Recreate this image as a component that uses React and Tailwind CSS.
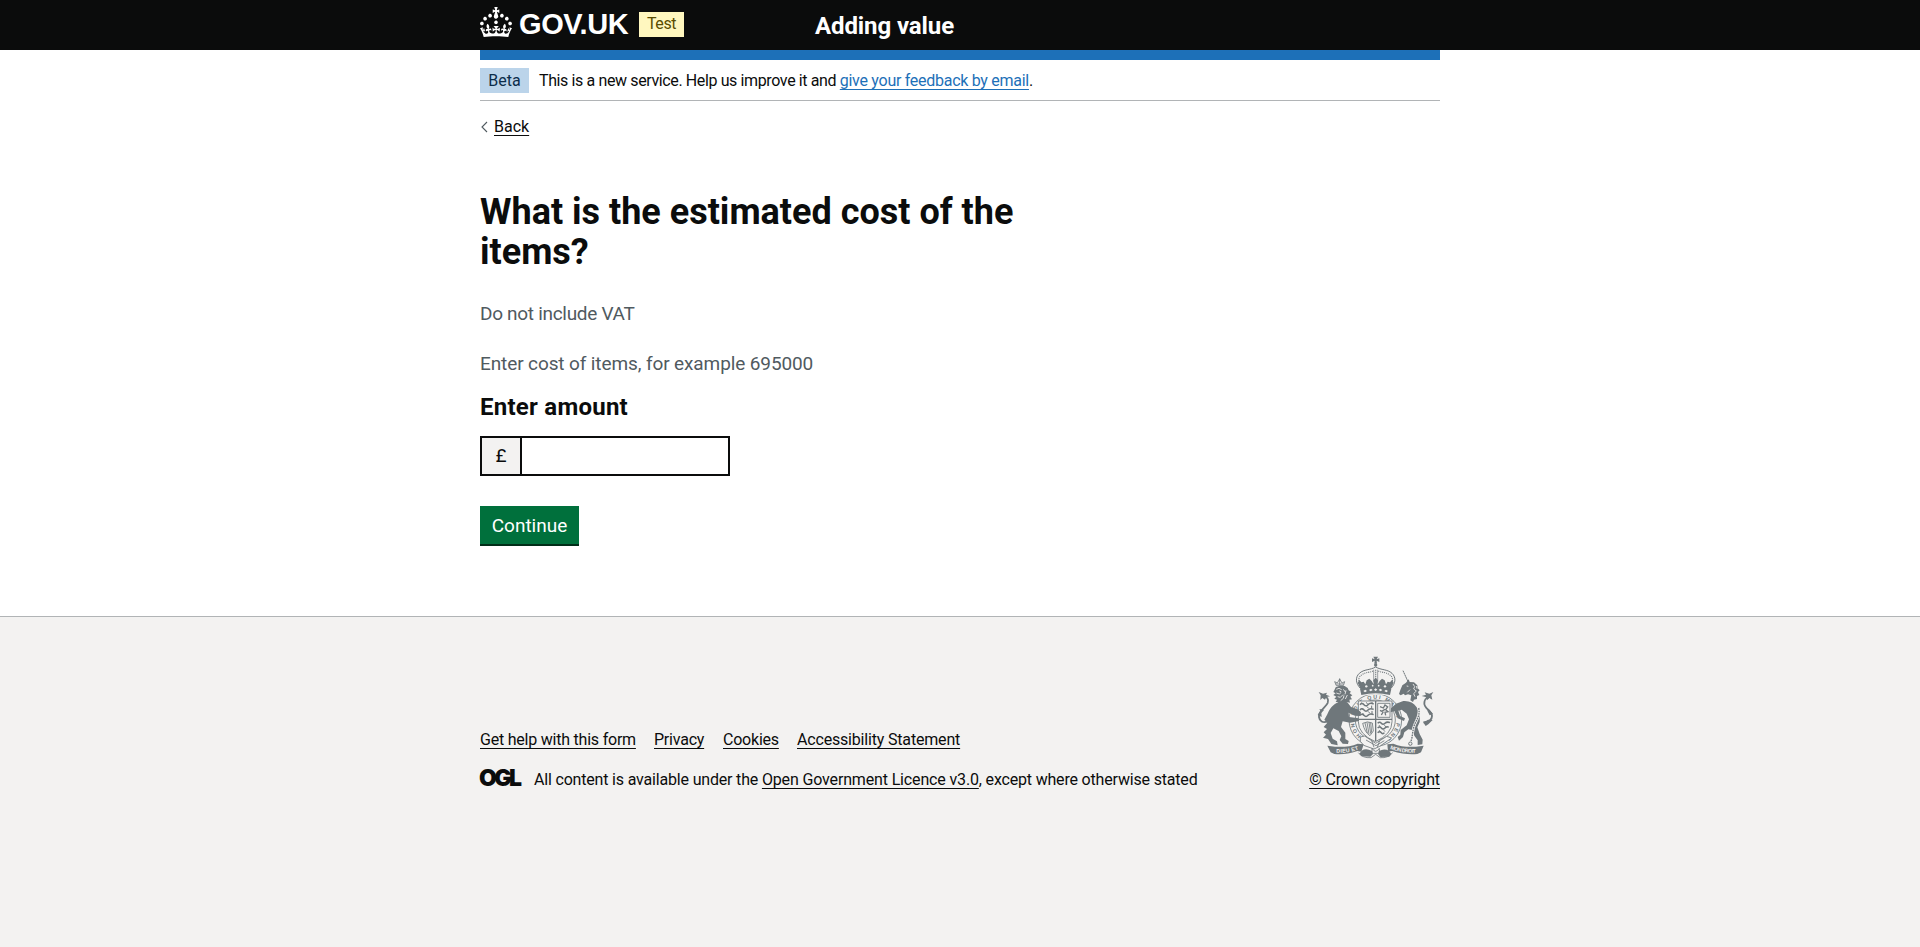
import React from "react";

const linkBase = "underline decoration-1 underline-offset-[3px]";

function CrownLogo() {
  return (
    <svg className="h-[30px] w-8 shrink-0 fill-white" viewBox="0 0 32 30" aria-hidden="true">
      <path d="M22.6 10.4c-1 .4-2-.1-2.4-1-.4-.9.1-2 1-2.4.9-.4 2 .1 2.4 1s-.1 2-1 2.4m-5.9 6.7c-.9.4-2-.1-2.4-1-.4-.9.1-2 1-2.4.9-.4 2 .1 2.4 1s-.1 2-1 2.4m10.8-3.7c-1 .4-2-.1-2.4-1-.4-.9.1-2 1-2.4.9-.4 2 .1 2.4 1s0 2-1 2.4m3.3 4.8c-1 .4-2-.1-2.4-1-.4-.9.1-2 1-2.4.9-.4 2 .1 2.4 1s-.1 2-1 2.4M17 4.7l2.3 1.2V2.5l-2.3.7-.2-.2.9-3h-3.4l.9 3-.2.2c-.1.1-2.3-.7-2.3-.7v3.4L15 4.7c.1.1.1.2.2.2l-1.3 4c-.1.2-.1.4-.1.6 0 1.1.8 2 1.9 2.2h.7c1-.2 1.9-1.1 1.9-2.1 0-.2 0-.4-.1-.6l-1.3-4c-.1-.2 0-.2.1-.3m-7.6 5.7c.9.4 2-.1 2.4-1 .4-.9-.1-2-1-2.4-.9-.4-2 .1-2.4 1s0 2 1 2.4m-5 3c.9.4 2-.1 2.4-1 .4-.9-.1-2-1-2.4-.9-.4-2 .1-2.4 1s.1 2 1 2.4m-3.2 4.8c.9.4 2-.1 2.4-1 .4-.9-.1-2-1-2.4-.9-.4-2 .1-2.4 1s0 2 1 2.4m14.8 11c4.4 0 8.6.3 12.3.8 1.1-4.5 2.4-7 3.7-8.8l-2.5-.9c.2 1.3.3 1.9 0 2.7-.4-.4-.8-1.1-1.1-2.3l-1.2 4c.7-.5 1.3-.8 2-.9-1.1 2.5-2.6 3.1-3.5 3-1.1-.2-1.7-1.2-1.5-2.1.3-1.2 1.5-1.5 2.1-.1 1.1-2.3-.8-3-2-2.3 1.9-1.9 2.1-3.5.6-5.6-2.1 1.6-2.1 3.2-1.2 5.5-1.2-1.4-3.2-.6-2.5 1.6.9-1.4 2.1-.5 1.9.8-.2 1.1-1.7 2.1-3.5 1.9-2.7-.2-2.9-2.1-2.9-3.6.7-.1 1.9.5 2.9 1.9l.4-4.3c-1.1 1.1-2.1 1.4-3.2 1.4.4-1.2 2.1-3 2.1-3h-5.4s1.7 1.9 2.1 3c-1.1 0-2.1-.2-3.2-1.4l.4 4.3c1-1.4 2.2-2 2.9-1.9-.1 1.5-.2 3.4-2.9 3.6-1.9.2-3.4-.8-3.5-1.9-.2-1.3 1-2.2 1.9-.8.7-2.3-1.2-3-2.5-1.6.9-2.2.9-3.9-1.2-5.5-1.5 2-1.3 3.7.6 5.6-1.2-.7-3.1 0-2 2.3.6-1.4 1.8-1.1 2.1.1.2.9-.3 1.9-1.5 2.1-.9.2-2.4-.5-3.5-3 .6 0 1.2.3 2 .9l-1.2-4c-.3 1.1-.7 1.9-1.1 2.3-.3-.8-.2-1.4 0-2.7l-2.9.9C1.3 23 2.6 25.5 3.7 30c3.7-.5 7.9-.8 12.3-.8" />
    </svg>
  );
}

function RoyalArms() {
  return (
    <svg
      className="h-[105px] w-[120px] fill-[#6f777b] stroke-[#6f777b]"
      viewBox="75 46 360 315"
      strokeWidth="0"
      aria-hidden="true"
    >
      {/* crown */}
      <path d="M253 72 254 63 246 67V56L254 59 250 51H264L260 59 268 56V67L260 63 261 72Z" />
      <circle cx="257" cy="76" r="5" />
      <g fill="none" strokeWidth="3">
        <path d="M211 146C196 130 196 112 208 101 222 88 240 92 257 82 274 92 292 88 306 101 318 112 318 130 303 146" />
        <path d="M251 90V126M263 90V126" strokeWidth="2" />
        <path d="M257 90V122" strokeWidth="4" strokeDasharray="3 3" />
        <path d="M213 134C202 120 206 112 216 105 230 96 240 99 249 94M301 134C312 120 308 112 298 105 284 96 274 99 265 94" strokeWidth="3.5" strokeDasharray="3 3" />
      </g>
      <path d="M203 129 208 121 214 128 221 126 226 134 230 122 238 117 245 124 251 134 250 122 257 114 264 122 263 134 269 124 276 117 284 122 288 134 293 126 300 128 306 121 311 129 302 149H212Z" />
      <path d="M210 147Q257 137 304 147L300 166Q257 156 214 166Z" />
      <g className="fill-[#f3f2f1]">
        <path d="M220 154l6-4 5 4-6 4zM237 151l6-4 5 4-6 4zM252 150l5-4 5 4-5 4zM266 151l5-4 6 4-5 4zM283 154l5-4 6 4-5 4z" />
        <circle cx="229" cy="140" r="3.5" /><circle cx="285" cy="140" r="3.5" />
        <circle cx="248" cy="138" r="2.5" /><circle cx="266" cy="138" r="2.5" />
      </g>
      {/* garter */}
      <clipPath id="below-crown"><path d="M75 169H214Q257 159 300 169H435V361H75Z" /></clipPath>
      <g clipPath="url(#below-crown)" fill="none" strokeWidth="2.5">
        <circle cx="256" cy="241" r="79" />
        <circle cx="256" cy="241" r="60" />
      </g>
      <path id="garter-band" d="M256 305A64 64 0 0 1 256 177A64 64 0 0 1 256 305" fill="none" />
      <text className="font-['Liberation_Sans',sans-serif] text-[16px] font-bold" textLength="336">
        <textPath href="#garter-band" startOffset="46">HONI SOIT QUI MAL Y PENSE</textPath>
      </text>
      {/* shield */}
      <path d="M205 184H306V246Q306 284 256 306 205 284 205 246Z" className="fill-[#f3f2f1]" strokeWidth="2.5" />
      <path d="M257 184V304M205 239H306" strokeWidth="4" />
      <g fill="none" strokeWidth="4.5">
        <path d="M210 195q6-7 12 0t12 0 17-2M210 211q6-7 12 0t12 0 17-2M210 227q6-7 12 0t12 0 17-2" />
        <path d="M214 189l7 6M230 200l6 6M245 198v8M214 205l6 6M234 215l6 6M218 220l5 9M246 214v9M229 188l4 6M246 187v6" strokeWidth="3" />
        <path d="M263 251q6-6 11 0t11 0 15-2M263 265q6-6 11 0t11 0 11-2M263 279q6-6 11 0t9 0" />
        <path d="M267 256l5 8M283 256l6 8M267 271l6 7M280 270l5 6" strokeWidth="2.5" />
        <path d="M263 191H300V233H263Z" strokeWidth="2.5" />
        <path d="M270 201l10 4 5-9 8 6-6 8 7 6-9 2 2 9M285 209l-10 6-5-3M280 216l-6 10" strokeWidth="4" />
        <path d="M218 251Q232 243 247 250L250 274 240 288Q224 278 218 251M225 250l7 30M231 248l6 35M237 248l5 34M242 249l3 30" strokeWidth="2.5" />
      </g>
      {/* lion */}
      <g fill="none" strokeWidth="2.5">
        <path d="M139 138l-5-12 8 4 7-12 7 12 8-4-4 12ZM137 133h24M149 116v20" />
      </g>
      <path d="M133 152l4-9 12-5 15 1 9 6 3 7 7 4-4 5 8 6-6 4 5 8-8 1 2 9-9-2-4 7-15-2-8 3 1-8-8 0 4-7-8-3 6-6-9-5 7-5-7-4Z" />
      <path d="M139 149l8-3 8 4M139 160l9 3 6-5M143 171l8 2 8-8M152 183l8-7 2-9M160 149l6 8M168 152l-3 12M172 166l-6 12M148 154l5 2" fill="none" className="stroke-[#f3f2f1]" strokeWidth="2.5" />
      <path d="M148 186C128 193 118 208 112 224L103 240 112 249 101 262 111 268 101 278 108 285 99 294 114 298 124 313 143 317 141 305 128 297 122 280 130 266 146 274 154 290 149 301 158 312 174 313 176 304 166 298 166 279 153 262 158 245 180 249 207 244 206 236 177 232 176 219 195 228 211 229 213 218 203 209 183 202 172 188Z" />
      <path d="M113 246Q90 252 87 232C84 214 108 203 113 190 117 178 111 170 101 172" fill="none" strokeWidth="5.5" />
      <path d="M86 157l13 5 12-3-3 6 12 5-11 2-4 8-8-5-6 6 1-14ZM83 226l8-13-3-5 14 3-8 9 1 12Z" />
      {/* unicorn */}
      <path d="M339 93L355 128" fill="none" strokeWidth="3" strokeDasharray="6 1" />
      <path d="M331 151l6-14 11-8 8-10 3 8 13 1 10 9 1 9 6 6-5 5 4 9-7 3 0 9-9 2-3 7-8-5 3-15-10-3-9 3-4-5-9 5-5-4Z" />
      <path d="M369 133q9 8 2 15l8 6-8 8 4 9M350 139l5 1M379 139l2 8M360 150l-8 8" fill="none" className="stroke-[#f3f2f1]" strokeWidth="2.5" />
      <path d="M340 184Q366 182 380 203 392 224 389 247L382 263 389 283 398 300 397 314 383 316 383 302 373 288 367 271 355 269 343 278 339 292 327 303 323 292 331 285 332 271 350 257 357 239 350 222 335 210 325 213 330 229 345 236 342 244 323 236 313 214 302 218 303 206 318 192Z" />
      <path d="M400 248Q426 246 426 229C426 213 402 207 403 191 403 182 408 173 417 173" fill="none" strokeWidth="5.5" />
      <path d="M430 157l-12 5-14-4 4 7-13 4 12 3 4 10 7-7 9 5-3-13ZM429 222l-13-14-4 5 7 14ZM401 250l13-10 14 1-13 13-8 5Z" />
      <path d="M386 205C392 232 376 242 371 264S367 297 362 306" fill="none" className="stroke-[#f3f2f1]" strokeWidth="8" />
      <path d="M386 205C392 232 376 242 371 264S367 297 362 306" fill="none" strokeWidth="4" strokeDasharray="5 2.5" />
      <circle cx="361" cy="312" r="5" fill="none" strokeWidth="3" />
      {/* belt and compartment */}
      <path d="M211 292l13-3 33 22 33-21 15 5-36 25-17 8-31-11-10-12Z" className="fill-[#f3f2f1]" strokeWidth="2.5" />
      <path d="M228 301l30 17 25-15M245 303l7 20M269 303l-7 20" fill="none" strokeWidth="2.5" />
      <path d="M215 333q13-9 31 1l3 9-8 8-27-1-6-8ZM267 334q15-9 30-1l7 9-6 9-27 1-7-9Z" />
      <path d="M205 339Q218 356 243 354L257 344 271 354Q294 356 308 339M246 326q11 18 22 0v15H246Z" fill="none" strokeWidth="2.5" />
      {/* motto scrolls */}
      <path d="M112 318l23 3q38 3 68-9l18 2-7 22-12-2q-38 13-69 9l-11-5Z" />
      <path d="M401 318l-23 3q-38 3-68-9l-18 2 2 22 12-2q43 13 76 9l11-5Z" />
      <path id="motto-left" d="M139 339Q177 341 209 328" fill="none" />
      <path id="motto-right" d="M300 328Q337 341 380 339" fill="none" />
      <g className="fill-[#f3f2f1] font-['Liberation_Sans',sans-serif] text-[16px] font-bold">
        <text textLength="68"><textPath href="#motto-left">DIEU ET</textPath></text>
        <text textLength="79"><textPath href="#motto-right">MON DROIT</textPath></text>
      </g>
    </svg>
  );
}

function Header() {
  return (
    <header className="bg-[#0b0c0c]">
      <div className="mx-auto flex h-[50px] w-[960px] text-white">
        <a className="flex w-[335px] items-start pt-[7px]" href="#">
          <CrownLogo />
          <span className="ml-[7px] w-[120px] font-['Liberation_Sans',sans-serif] text-[29px] leading-[34px] font-bold tracking-[-0.4px]">
            GOV.UK
          </span>
          <span className="mt-[5px] h-[25px] w-[45px] bg-[#fff7bf] text-center leading-[24px] tracking-[-0.4px] text-[#594d00]">
            Test
          </span>
        </a>
        <a className="pt-[11px] text-2xl leading-[30px] font-bold tracking-[-0.1px]" href="#">
          Adding value
        </a>
      </div>
    </header>
  );
}

function PhaseBanner() {
  return (
    <div className="flex h-[41px] items-start border-b border-[#b1b4b6] pt-2">
      <strong className="h-[25px] w-[49px] bg-[#bbd4ea] text-center leading-[25px] font-normal text-[#0c2d4a]">
        Beta
      </strong>
      <span className="ml-[10px] leading-[25px] tracking-[-0.38px]">
        This is a new service. Help us improve it and{" "}
        <a className={`${linkBase} tracking-[-0.28px] text-[#1d70b8]`} href="#">give your feedback by email</a>.
      </span>
    </div>
  );
}

function AmountForm() {
  return (
    <main className="w-[630px] pt-[55px]">
      <h1 className="w-[560px] text-4xl leading-10 font-bold">What is the estimated cost of the items?</h1>
      <p className="mt-[29px] text-[19px] leading-[25px] tracking-[-0.3px] text-[#505a5f]">Do not include VAT</p>
      <p className="mt-[25px] text-[19px] leading-[25px] tracking-[-0.11px] text-[#505a5f]">
        Enter cost of items, for example 695000
      </p>
      <label className="mt-4 block text-2xl leading-[30px] font-bold tracking-[0.25px]" htmlFor="amount">
        Enter amount
      </label>
      <div className="mt-[14px] flex h-10 w-[250px] border-2 border-[#0b0c0c]">
        <span className="flex w-10 items-center justify-center border-r-2 border-[#0b0c0c] bg-[#f3f2f1] text-[19px]">£</span>
        <input className="w-[206px] bg-white px-1 text-[19px] outline-none" id="amount" />
      </div>
      <button className="mt-[30px] flex h-10 w-[99px] justify-center border-b-2 border-[#002d18] bg-[#00703c] text-[19px] leading-[39px] text-white">
        Continue
      </button>
    </main>
  );
}

function Footer() {
  return (
    <footer className="mt-[70px] flex-1 border-t border-[#b1b4b6] bg-[#f3f2f1]">
      <div className="mx-auto flex w-[960px] items-end justify-between pt-[38px] leading-5">
        <div>
          <ul className="mb-5 flex tracking-[-0.22px]">
            <li className="w-[174px]"><a className={linkBase} href="#">Get help with this form</a></li>
            <li className="w-[69px]"><a className={linkBase} href="#">Privacy</a></li>
            <li className="w-[74px]"><a className={linkBase} href="#">Cookies</a></li>
            <li><a className={`${linkBase} tracking-[-0.18px]`} href="#">Accessibility Statement</a></li>
          </ul>
          <div className="flex">
            <span className="-mt-[2px] -ml-px w-[55px] font-['Inter',sans-serif] text-[23px] leading-5 font-black tracking-[-2.6px]">
              OGL
            </span>
            <span className="tracking-[-0.18px]">
              All content is available under the{" "}
              <a className={`${linkBase} tracking-[-0.15px]`} href="#">Open Government Licence v3.0</a>
              , except where otherwise stated
            </span>
          </div>
        </div>
        <a className="flex flex-col items-center" href="#">
          <RoyalArms />
          <span className={`mt-[10px] tracking-[-0.1px] ${linkBase}`}>© Crown copyright</span>
        </a>
      </div>
    </footer>
  );
}

export default function App() {
  return (
    <div className="flex min-h-screen flex-col bg-white font-[Roboto,sans-serif] text-base text-[#0b0c0c]">
      <Header />
      <div className="mx-auto w-[960px] border-t-10 border-[#1d70b8]">
        <PhaseBanner />
        <a className="mt-4 flex w-fit items-center leading-[20px]" href="#">
          <svg className="mr-[6px] h-3 w-2 fill-none stroke-[#505a5f]" viewBox="0 0 8 12" strokeWidth="1.1" aria-hidden="true">
            <path d="M7 1 2 6l5 5" />
          </svg>
          <span className={linkBase}>Back</span>
        </a>
        <AmountForm />
      </div>
      <Footer />
    </div>
  );
}
